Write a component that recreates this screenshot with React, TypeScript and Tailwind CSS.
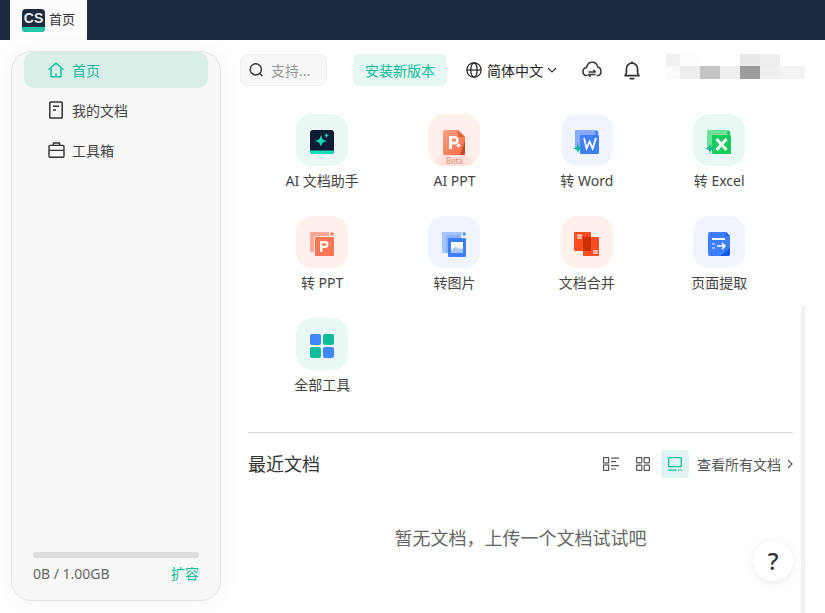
import React from "react";

const font = { fontFamily: '"Noto Sans", "Noto Sans CJK SC", sans-serif' };

const HomeIcon = () => (
  <svg width="16" height="16" viewBox="0 0 18 18" fill="none" stroke="#12c2a0" strokeWidth="1.7" strokeLinejoin="round">
    <path d="M1.2 8.2 9 1.2l7.8 7" strokeLinecap="round" />
    <path d="M3.4 6.6v10h11.2v-10" />
    <path d="M9 12.6v4" />
  </svg>
);
const DocIcon = () => (
  <svg width="16" height="18" viewBox="0 0 16 18" fill="none" stroke="#333" strokeWidth="1.5">
    <rect x="1.8" y="1" width="12.4" height="16" rx="0.8" />
    <path d="M5 5.2h6M5 9h3" />
  </svg>
);
const CaseIcon = () => (
  <svg width="17" height="16" viewBox="0 0 17 16" fill="none" stroke="#333" strokeWidth="1.4">
    <rect x="1" y="3.4" width="15" height="11.8" rx="1" />
    <path d="M5.4 3.4V1h6.2v2.4M1 8.4h15" />
  </svg>
);
const SearchIcon = () => (
  <svg width="16" height="16" viewBox="0 0 16 16" fill="none" stroke="#333" strokeWidth="1.4" strokeLinecap="round">
    <circle cx="6.8" cy="7.4" r="5.6" />
    <path d="m11 11.8 2 2" />
  </svg>
);
const Globe = () => (
  <svg width="16" height="16" viewBox="0 0 16 16" fill="none" stroke="#222" strokeWidth="1.2">
    <circle cx="8" cy="8" r="7.2" />
    <ellipse cx="8" cy="8" rx="3.2" ry="7.2" />
    <path d="M1 8h14" />
  </svg>
);
const Chevron = ({ dir = "down" }: { dir?: string }) =>
  dir === "down" ? (
    <svg width="10" height="6" viewBox="0 0 10 6" fill="none" stroke="#333" strokeWidth="1.1">
      <path d="m1 1 4 4 4-4" />
    </svg>
  ) : (
    <svg width="6" height="10" viewBox="0 0 6 10" fill="none" stroke="#555" strokeWidth="1.1">
      <path d="m1 1 4 4-4 4" />
    </svg>
  );
const CloudIcon = () => (
  <svg width="20" height="18" viewBox="0 0 20 18" fill="none" stroke="#333" strokeWidth="1.5" strokeLinecap="round" strokeLinejoin="round">
    <path d="M5 14.6C2.6 14.4 1 12.6 1 10.4 1 8.2 2.6 6.6 4.6 6.4 5.2 3.2 7.4 1.2 10.2 1.2c2.8 0 5 2 5.4 4.8 2 .4 3.4 2 3.4 4.4 0 2.2-1.6 4-3.8 4.2" />
    <path d="M7 11h6.4l-1.6-1.6M13 13.6H6.6L8.2 15.4" />
  </svg>
);
const BellIcon = () => (
  <svg width="18" height="19" viewBox="0 0 18 19" fill="none" stroke="#333" strokeWidth="1.7" strokeLinejoin="round" strokeLinecap="round">
    <path d="M2 14.6c1-.8 1.4-2 1.4-3.6V8A5.6 5.6 0 0 1 9 2.2 5.6 5.6 0 0 1 14.6 8v3c0 1.6.4 2.8 1.4 3.6H2Z" />
    <path d="M9 1v1.2M7.2 17.6h3.6" />
  </svg>
);
const Sparkle = ({ x, y, s, fill }: { x: number; y: number; s: number; fill: string }) => (
  <path
    d={`M${x} ${y - s}C${x + s * 0.18} ${y - s * 0.3} ${x + s * 0.3} ${y - s * 0.18} ${x + s} ${y}C${x + s * 0.3} ${y + s * 0.18} ${x + s * 0.18} ${y + s * 0.3} ${x} ${y + s}C${x - s * 0.18} ${y + s * 0.3} ${x - s * 0.3} ${y + s * 0.18} ${x - s} ${y}C${x - s * 0.3} ${y - s * 0.18} ${x - s * 0.18} ${y - s * 0.3} ${x} ${y - s}Z`}
    fill={fill}
  />
);

const AiIcon = () => (
  <svg width="24" height="24" viewBox="0 0 24 24">
    <rect width="24" height="24" rx="3" fill="#0b1c33" />
    <path d="M0 20.5h24V21a3 3 0 0 1-3 3H3a3 3 0 0 1-3-3Z" fill="#14dcb8" />
    <Sparkle x={11} y={11} s={6} fill="#14dcb8" />
    <Sparkle x={16.5} y={5.5} s={2.8} fill="#14dcb8" />
  </svg>
);
const AiPptIcon = () => (
  <svg width="22" height="25" viewBox="0 0 22 25">
    <defs>
      <linearGradient id="pg" x1="0" y1="0" x2="1" y2="1">
        <stop offset="0" stopColor="#ffa184" />
        <stop offset="1" stopColor="#f96a42" />
      </linearGradient>
    </defs>
    <path d="M1.5 0H15l7 7v16.5a1.5 1.5 0 0 1-1.5 1.5h-19A1.5 1.5 0 0 1 0 23.5v-22A1.5 1.5 0 0 1 1.5 0Z" fill="url(#pg)" />
    <path d="M15 0l7 7h-7Z" fill="#e0653f" />
    <path d="M22 11v12.5a1.5 1.5 0 0 1-1.5 1.5H17Z" fill="#c8482a" />
    <path d="M6 6h5.5a4 4 0 0 1 0 8.4H9V19H6Zm3 2.6v3.2h2.5a1.6 1.6 0 0 0 0-3.2Z" fill="#fff" />
    <Sparkle x={15.5} y={15.5} s={3} fill="#fff" />
  </svg>
);
const ConvIcon = ({ color, back, star, letter }: { color: string; back: string; star: string; letter: "W" | "X" }) => (
  <svg width="26" height="24" viewBox="0 0 26 24" className="-ml-[2px]">
    <path d="M3 0h20a1 1 0 0 1 1 1v4H10a3 3 0 0 0-3 3v10H2V1a1 1 0 0 1 1-1Z" fill={back} />
    <path d="M22.5 1h2.5v4h-2.5Z" fill={color} />
    <rect x="7" y="5" width="19" height="19" rx="1" fill={color} />
    {letter === "W" ? (
      <path d="m11 8 2.6 10.5 3-7 3 7L23 8" fill="none" stroke="#fff" strokeWidth="1.8" />
    ) : (
      <path d="m11.5 9 10 11M21.5 9l-10 11" fill="none" stroke="#fff" strokeWidth="3" />
    )}
    <Sparkle x={5} y={18.5} s={5} fill={star} />
  </svg>
);
const PptConvIcon = () => (
  <svg width="24" height="24" viewBox="0 0 24 24">
    <path d="M1 0h18v4H7a3 3 0 0 0-3 3v13H1a1 1 0 0 1-1-1V1a1 1 0 0 1 1-1Z" fill="#ffa695" />
    <path d="M20.5 0.5h3v3h-3Z" fill="#ff7654" />
    <rect x="5" y="5" width="19" height="19" rx="1" fill="#ff7654" />
    <path d="M10 9h5a3.4 3.4 0 0 1 0 7h-2.6v4H10Zm2.4 2.2v2.8H15a1.4 1.4 0 0 0 0-2.8Z" fill="#fff" />
  </svg>
);
const ImgIcon = () => (
  <svg width="24" height="25" viewBox="0 0 24 25">
    <path d="M1 0h19v3H7a3 3 0 0 0-3 3v15H1a1 1 0 0 1-1-1V1a1 1 0 0 1 1-1Z" fill="#a5c3ff" />
    <path d="M4 3h15v3H8a2 2 0 0 0-2 2v13H4Z" fill="#8cb2ff" />
    <path d="M21 0.5h2.5v3H21Z" fill="#3d7fff" />
    <rect x="6" y="6" width="18" height="19" rx="1" fill="#3d7fff" />
    <rect x="9" y="10" width="12" height="11" fill="#fff" />
    <path d="M9 21v-2c3-4 4.4-4.6 6-3.4 1.6 1.2 3.6 1.6 6 .6v4.8Z" fill="#a9c6ff" />
  </svg>
);
const MergeIcon = () => (
  <svg width="25" height="24" viewBox="0 0 25 24">
    <rect width="17" height="19" rx="1" fill="#ff4d1f" />
    <rect x="9" y="5" width="16" height="19" rx="1" fill="#ff4d1f" />
    <rect x="9" y="5" width="8" height="14" fill="#c93000" />
    <rect x="3" y="2" width="5" height="5" fill="#ffb39e" />
    <rect x="19" y="18" width="5" height="4" fill="#ffb39e" />
  </svg>
);
const PageIcon = () => (
  <svg width="22" height="24" viewBox="0 0 22 24">
    <path d="M2 0h16l4 4v18a2 2 0 0 1-2 2H2a2 2 0 0 1-2-2V2a2 2 0 0 1 2-2Z" fill="#3d7fff" />
    <path d="M22 16v6a2 2 0 0 1-2 2H12Z" fill="#1257e8" />
    <path d="M18 0l4 4h-4Z" fill="#1f63ee" />
    <path d="M4 7h13" stroke="#fff" strokeWidth="1.8" />
    <path d="M4 12h3M4 16h3" stroke="#b9d1ff" strokeWidth="1.4" />
    <path d="M9 14h8m-3-3 3 3-3 3" stroke="#fff" strokeWidth="1.5" fill="none" />
  </svg>
);
const AllIcon = () => (
  <svg width="24" height="24" viewBox="0 0 24 24">
    <rect width="11" height="11" rx="2" fill="#3f86ff" />
    <rect x="13" width="11" height="11" rx="2" fill="#0dbb9a" />
    <rect y="13" width="11" height="11" rx="2" fill="#0dbb9a" />
    <rect x="13" y="13" width="11" height="11" rx="2" fill="#3f86ff" />
  </svg>
);

const ListView = () => (
  <svg width="16" height="14" viewBox="0 0 16 14" fill="none" stroke="#555" strokeWidth="1.2">
    <rect x="0.6" y="0.6" width="5" height="5.4" />
    <rect x="0.6" y="8" width="5" height="5.4" />
    <path d="M8 1.2h8M8 4.6h5M8 8.6h8M8 12h5" />
  </svg>
);
const GridView = () => (
  <svg width="14" height="14" viewBox="0 0 14 14" fill="none" stroke="#555" strokeWidth="1.2">
    <rect x="0.6" y="0.6" width="5.2" height="5.2" rx="0.5" />
    <rect x="8.2" y="0.6" width="5.2" height="5.2" rx="0.5" />
    <rect x="0.6" y="8.2" width="5.2" height="5.2" rx="0.5" />
    <rect x="8.2" y="8.2" width="5.2" height="5.2" rx="0.5" />
  </svg>
);
const CardView = () => (
  <svg width="14" height="14" viewBox="0 0 14 14" fill="none" stroke="#0dbb9a" strokeWidth="1.3">
    <rect x="0.7" y="0.7" width="12.6" height="9" rx="1" />
    <path d="M0 13.2h8.5M10 13.2h1.4M12.6 13.2H14" />
  </svg>
);

const tiles = [
  { label: "AI 文档助手", bg: "bg-[#e9f8f5]", icon: <AiIcon /> },
  { label: "AI PPT", bg: "bg-[#fff0ec]", icon: <AiPptIcon />, beta: true },
  { label: "转 Word", bg: "bg-[#eff4ff]", icon: <ConvIcon letter="W" color="#3d7fff" back="#86aaff" star="#0db89b" /> },
  { label: "转 Excel", bg: "bg-[#e9f8f5]", icon: <ConvIcon letter="X" color="#12cc5c" back="#6fe097" star="#0db89b" /> },
  { label: "转 PPT", bg: "bg-[#fff0ec]", icon: <PptConvIcon /> },
  { label: "转图片", bg: "bg-[#eff4ff]", icon: <ImgIcon /> },
  { label: "文档合并", bg: "bg-[#fff0ec]", icon: <MergeIcon /> },
  { label: "页面提取", bg: "bg-[#eff4ff]", icon: <PageIcon /> },
  { label: "全部工具", bg: "bg-[#e9f8f5]", icon: <AllIcon /> },
];

const mosaic = [
  ["bg-[#f0f0f0] w-[14px]", "bg-[#fdfdfd] w-[20px]", "bg-white w-[20px]", "bg-white w-[20px]", "bg-[#e8e8e8] w-[20px]", "bg-[#eeeeee] w-[20px]", "bg-white w-[25px]"],
  ["bg-[#fafafa] w-[14px]", "bg-[#eeeeee] w-[20px]", "bg-[#c4c4c4] w-[20px]", "bg-[#eeeeee] w-[20px]", "bg-[#9c9c9c] w-[20px]", "bg-[#f0f0f0] w-[20px]", "bg-[#f3f3f3] w-[25px]"],
];

export default function App() {
  return (
    <div style={font} className="relative flex h-[613px] w-[825px] flex-col overflow-hidden bg-white text-[14px] text-[#333]">
      <div className="flex h-10 shrink-0 bg-[#1d2b3e] pl-[10px]">
        <div className="flex w-[77px] items-center gap-[4px] bg-[#fbfbfb] pl-[12px]">
          <div className="relative flex h-[23px] w-[23px] items-start justify-center overflow-hidden rounded-[4px] bg-[#1d2b3e] pt-[1px]">
            <span className="text-[14px] leading-[16px] font-bold text-[#e8eaee]" style={{ fontFamily: '"Liberation Sans", sans-serif' }}>CS</span>
            <div className="absolute inset-x-0 bottom-0 h-[5px] bg-[#1fc7a6]" />
          </div>
          <span className="text-[13px] text-[#333]">首页</span>
        </div>
      </div>

      <div className="flex min-h-0 flex-1 pt-[11px] pl-[11px]">
        <aside className="flex h-[550px] w-[210px] shrink-0 flex-col rounded-[20px] border border-[#e4e4e4] bg-[#f7f7f7] px-[12px] shadow-[0_0_24px_rgba(0,0,0,0.05)]">
          <nav className="flex flex-col gap-1">
            <div className="flex h-9 items-center gap-[8px] rounded-[10px] bg-[#d8eee9] pl-[24px] text-[#0dbb9a]">
              <HomeIcon />
              <span>首页</span>
            </div>
            <div className="flex h-9 items-center gap-[8px] pl-[24px] text-[#444]">
              <DocIcon />
              <span>我的文档</span>
            </div>
            <div className="flex h-9 items-center gap-[7px] pl-[24px] text-[#444]">
              <CaseIcon />
              <span>工具箱</span>
            </div>
          </nav>
          <div className="mt-auto px-[9px] pb-[17px]">
            <div className="h-[6px] rounded-[2px] bg-[#dddddd]" />
            <div className="mt-[5px] flex h-[20px] items-center justify-between text-[14px]">
              <span className="text-[#666]">0B / 1.00GB</span>
              <span className="text-[#0dbb9a]">扩容</span>
            </div>
          </div>
        </aside>

        <main className="ml-[19px] flex min-w-0 flex-1 flex-col">
          <header className="mt-[3px] flex h-8 items-center">
            <div className="flex h-8 w-[87px] items-center gap-[6px] rounded-[8px] border border-[#eeeeee] bg-[#f7f7f7] pl-[8px] text-[#999]">
              <SearchIcon />
              <span>支持...</span>
            </div>
            <div className="ml-[26px] flex h-8 w-[94px] items-center justify-center rounded-[6px] bg-[#e5f7f3] text-[#0dbb9a]">安装新版本</div>
            <div className="ml-[19px] flex items-center">
              <Globe />
              <span className="ml-[5px] text-[#222]">简体中文</span>
              <span className="ml-[4px] flex"><Chevron /></span>
            </div>
            <span className="ml-[25px] flex"><CloudIcon /></span>
            <span className="ml-[21px] flex"><BellIcon /></span>
            <div className="mt-[-7px] ml-[25px] flex flex-col">
              {mosaic.map((row, i) => (
                <div key={i} className={i === 0 ? "flex h-[12px]" : "flex h-[13px]"}>
                  {row.map((c, j) => (
                    <div key={j} className={c} />
                  ))}
                </div>
              ))}
            </div>
          </header>

          <section className="mt-[28px] ml-[16px] grid grid-cols-[repeat(4,132.33px)] gap-y-[25px]">
            {tiles.map((t) => (
              <div key={t.label} className="flex flex-col items-center">
                <div className={`relative flex h-[52px] w-[52px] items-center justify-center overflow-hidden rounded-[16px] pt-[4px] ${t.bg}`}>
                  {t.beta && (
                    <div className="absolute bottom-0 left-1/2 flex h-[11px] w-[40px] -translate-x-1/2 justify-center rounded-t-[20px] bg-[#ffe3dc] pt-[1px] text-[8px] leading-[10px] text-[#f0866c]">
                      Beta
                    </div>
                  )}
                  <span className="relative flex">{t.icon}</span>
                </div>
                <span className="mt-[5px] text-[14px] leading-[20px] whitespace-nowrap text-[#444]">{t.label}</span>
              </div>
            ))}
          </section>

          <div className="mt-[37px] mr-[32px] ml-[8px] border-t border-[#dddddd]" />

          <div className="mt-[17px] mr-[32px] ml-[8px] flex h-7 items-center">
            <span className="text-[18px] text-[#333]">最近文档</span>
            <div className="ml-auto flex items-center">
              <ListView />
              <span className="ml-[17px] flex"><GridView /></span>
              <span className="ml-[11px] flex h-7 w-7 items-center justify-center rounded-[4px] bg-[#dff5f1]"><CardView /></span>
              <span className="ml-[8px] text-[14px] whitespace-nowrap text-[#555]">查看所有文档</span>
              <span className="ml-[6px] flex"><Chevron dir="right" /></span>
            </div>
          </div>

          <div className="mt-[47px] mr-[32px] ml-[8px] text-center text-[18px] leading-[26px] text-[#666]">暂无文档，上传一个文档试试吧</div>
        </main>
      </div>

      <div className="absolute top-[306px] right-[20px] bottom-0 w-[4px] bg-[#f1f1f1]" />
      <div className="absolute top-[541px] left-[753px] flex h-10 w-10 items-center justify-center rounded-full bg-white text-[24px] font-medium text-[#333] shadow-[0_2px_12px_rgba(0,0,0,0.09)]">?</div>
    </div>
  );
}
